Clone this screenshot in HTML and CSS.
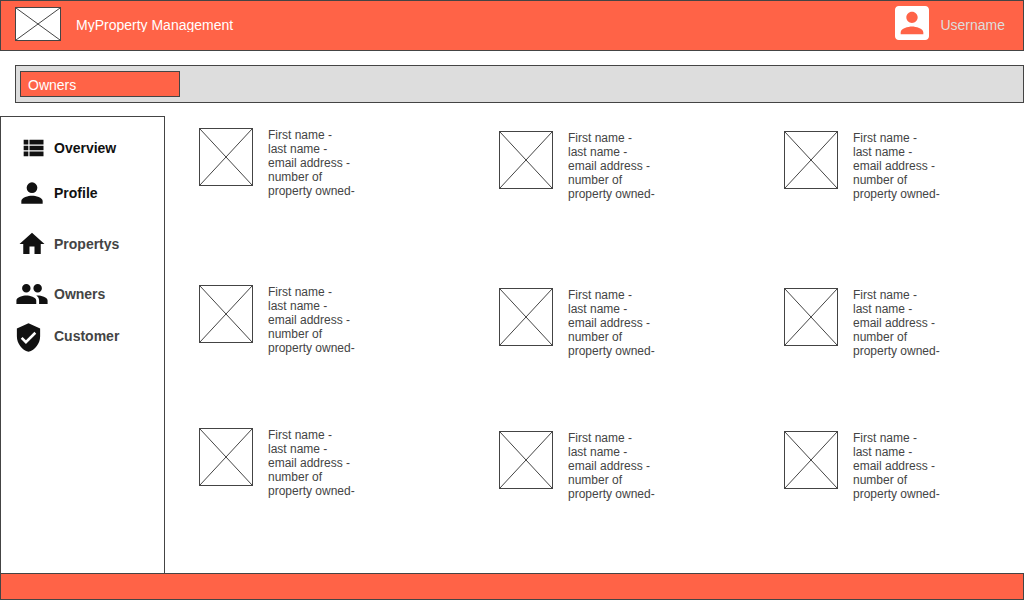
FILE: index.html
```html
<!DOCTYPE html>
<html lang="en">
<head>
<meta charset="utf-8">
<meta name="viewport" content="width=device-width, initial-scale=1">
<title>MyProperty Management</title>
<link rel="stylesheet" href="styles.css">
</head>
<body>
<header class="topbar">
  <svg class="placeholder logo" aria-hidden="true"><line x1="0" y1="0" x2="100%" y2="100%"/><line x1="100%" y1="0" x2="0" y2="100%"/></svg>
  <h1 class="title">MyProperty Management</h1>
  <svg class="avatar" viewBox="3 3 18 18" aria-hidden="true"><path d="M3 5v14c0 1.1.89 2 2 2h14c1.1 0 2-.9 2-2V5c0-1.1-.9-2-2-2H5c-1.11 0-2 .9-2 2zm12 4c0 1.66-1.34 3-3 3s-3-1.34-3-3 1.34-3 3-3 3 1.34 3 3zm-9 8c0-2 4-3.1 6-3.1s6 1.1 6 3.1v1H6v-1z"/></svg>
  <span class="username">Username</span>
</header>
<div class="toolbar">
  <button class="tab" type="button">Owners</button>
</div>
<div class="content">
  <nav class="sidebar">
    <a class="item strong" href="#"><span class="icon"><svg class="icon-list" viewBox="0 0 24 24"><path d="M4 14h4v-4H4v4zm0 5h4v-4H4v4zM4 9h4V5H4v4zm5 5h12v-4H9v4zm0 5h12v-4H9v4zM9 5v4h12V5H9z"/></svg></span><span class="label">Overview</span></a>
    <a class="item strong profile" href="#"><span class="icon"><svg class="icon-person" viewBox="0 0 24 24"><circle cx="12" cy="8" r="4"/><path d="M12 14c-2.670 0-8 1.340-8 4v2h16v-2c0-2.660-5.330-4-8-4z"/></svg></span><span class="label">Profile</span></a>
    <a class="item property" href="#"><span class="icon"><svg class="icon-home" viewBox="0 0 24 24"><path d="M10 20v-6h4v6h5v-8h3L12 3 2 12h3v8z"/></svg></span><span class="label">Propertys</span></a>
    <a class="item" href="#"><span class="icon"><svg class="icon-people" viewBox="0 0 24 24"><path d="M16 11c1.660 0 2.990-1.340 2.990-3S17.660 5 16 5c-1.660 0-3 1.340-3 3s1.340 3 3 3zm-8 0c1.660 0 2.990-1.340 2.990-3S9.660 5 8 5C6.340 5 5 6.340 5 8s1.340 3 3 3zm0 2c-2.330 0-7 1.170-7 3.500V19h14v-2.500c0-2.330-4.670-3.500-7-3.500zm8 0c-.29 0-.62.020-.97.050 1.160.84 1.970 1.970 1.970 3.450V19h6v-2.500c0-2.330-4.670-3.500-7-3.500z"/></svg></span><span class="label">Owners</span></a>
    <a class="item customer" href="#"><span class="icon"><svg class="icon-shield" viewBox="0 0 24 24"><path d="M12 1L3 5v6c0 5.550 3.840 10.740 9 12 5.160-1.260 9-6.450 9-12V5l-9-4zm-2 16l-4-4 1.410-1.410L10 14.170l6.590-6.590L18 9l-8 8z"/></svg></span><span class="label">Customer</span></a>
  </nav>
  <main class="owners">
    <article class="card"><svg class="placeholder photo" aria-hidden="true"><line x1="0" y1="0" x2="100%" y2="100%"/><line x1="100%" y1="0" x2="0" y2="100%"/></svg><p class="details">First name -<br>last name -<br>email address -<br>number of<br>property owned-</p></article>
    <article class="card"><svg class="placeholder photo" aria-hidden="true"><line x1="0" y1="0" x2="100%" y2="100%"/><line x1="100%" y1="0" x2="0" y2="100%"/></svg><p class="details">First name -<br>last name -<br>email address -<br>number of<br>property owned-</p></article>
    <article class="card"><svg class="placeholder photo" aria-hidden="true"><line x1="0" y1="0" x2="100%" y2="100%"/><line x1="100%" y1="0" x2="0" y2="100%"/></svg><p class="details">First name -<br>last name -<br>email address -<br>number of<br>property owned-</p></article>
    <article class="card"><svg class="placeholder photo" aria-hidden="true"><line x1="0" y1="0" x2="100%" y2="100%"/><line x1="100%" y1="0" x2="0" y2="100%"/></svg><p class="details">First name -<br>last name -<br>email address -<br>number of<br>property owned-</p></article>
    <article class="card"><svg class="placeholder photo" aria-hidden="true"><line x1="0" y1="0" x2="100%" y2="100%"/><line x1="100%" y1="0" x2="0" y2="100%"/></svg><p class="details">First name -<br>last name -<br>email address -<br>number of<br>property owned-</p></article>
    <article class="card"><svg class="placeholder photo" aria-hidden="true"><line x1="0" y1="0" x2="100%" y2="100%"/><line x1="100%" y1="0" x2="0" y2="100%"/></svg><p class="details">First name -<br>last name -<br>email address -<br>number of<br>property owned-</p></article>
    <article class="card"><svg class="placeholder photo" aria-hidden="true"><line x1="0" y1="0" x2="100%" y2="100%"/><line x1="100%" y1="0" x2="0" y2="100%"/></svg><p class="details">First name -<br>last name -<br>email address -<br>number of<br>property owned-</p></article>
    <article class="card"><svg class="placeholder photo" aria-hidden="true"><line x1="0" y1="0" x2="100%" y2="100%"/><line x1="100%" y1="0" x2="0" y2="100%"/></svg><p class="details">First name -<br>last name -<br>email address -<br>number of<br>property owned-</p></article>
    <article class="card"><svg class="placeholder photo" aria-hidden="true"><line x1="0" y1="0" x2="100%" y2="100%"/><line x1="100%" y1="0" x2="0" y2="100%"/></svg><p class="details">First name -<br>last name -<br>email address -<br>number of<br>property owned-</p></article>
  </main>
</div>
<footer class="bottombar"></footer>
</body>
</html>
```
FILE: styles.css
```css
* { box-sizing: border-box; }

body {
  margin: 0;
  min-height: 100vh;
  display: flex;
  flex-direction: column;
  background: #fff;
  color: #444;
  font: 14px/14px "Liberation Sans", Arial, sans-serif;
}

.topbar {
  display: flex;
  align-items: center;
  padding: 4px 18px 6px 14px;
  min-height: 51px;
  background: #ff6347;
  border: 1px solid #444;
}

.placeholder {
  flex: none;
  background: #fff;
  border: 1px solid #444;
}
.placeholder line { stroke: #444; stroke-width: 1; }

.logo { width: 46px; height: 34px; margin-bottom: 1px; }

.title {
  margin: 0 auto 0 15px;
  padding-right: 2px;
  color: #fff;
  font-size: 14px;
  font-weight: 400;
  overflow: hidden;
}

.avatar { width: 34px; height: 34px; margin: 0 11px 3px 0; fill: #fff; }
.username { color: #ddd; }

.toolbar {
  margin: 14px 0 13px 15px;
  padding: 5px 4px;
  background: #ddd;
  border: 1px solid #444;
  display: flex;
}

.tab {
  width: 160px;
  height: 26px;
  padding: 2px 7px 0;
  background: #ff6347;
  border: 1px solid #444;
  color: #fff;
  font: inherit;
  text-align: left;
}

.content { flex: 1; display: flex; }

.sidebar {
  flex: none;
  width: 165px;
  padding: 9px 12px;
  border: 1px solid #444;
  border-bottom: 0;
}

.item {
  display: flex;
  align-items: center;
  gap: 4px;
  height: 44px;
  color: #444;
  font-weight: 700;
  text-decoration: none;
}
.strong { color: #111; }
.profile { height: 46px; }
.property { height: 56px; }
.customer { height: 40px; }
.label { padding-right: 2px; overflow: hidden; }

.icon { flex: none; width: 37px; display: flex; justify-content: center; }
.icon svg { display: block; fill: #111; }
.icon-list { width: 28px; height: 28px; margin-left: 3px; }
.icon-person { width: 32px; height: 32px; }
.icon-home { width: 30px; height: 30px; }
.icon-people { width: 34px; height: 34px; }
.icon .icon-shield { width: 31px; height: 31px; margin: 3px auto 0 0; }

.owners {
  flex: 1;
  display: grid;
  grid-template-columns: 300fr 285fr 240fr;
  grid-template-rows: 157fr 143fr 145fr;
  padding: 12px 0 0 34px;
}

.card { display: flex; align-items: flex-start; gap: 15px; padding-top: 3px; }
.card:nth-child(3n+1) { padding-top: 0; }
.photo { width: 54px; height: 58px; }
.details { margin: 0; font-size: 12px; }

.bottombar { height: 27px; background: #ff6347; border: 1px solid #444; }
```
